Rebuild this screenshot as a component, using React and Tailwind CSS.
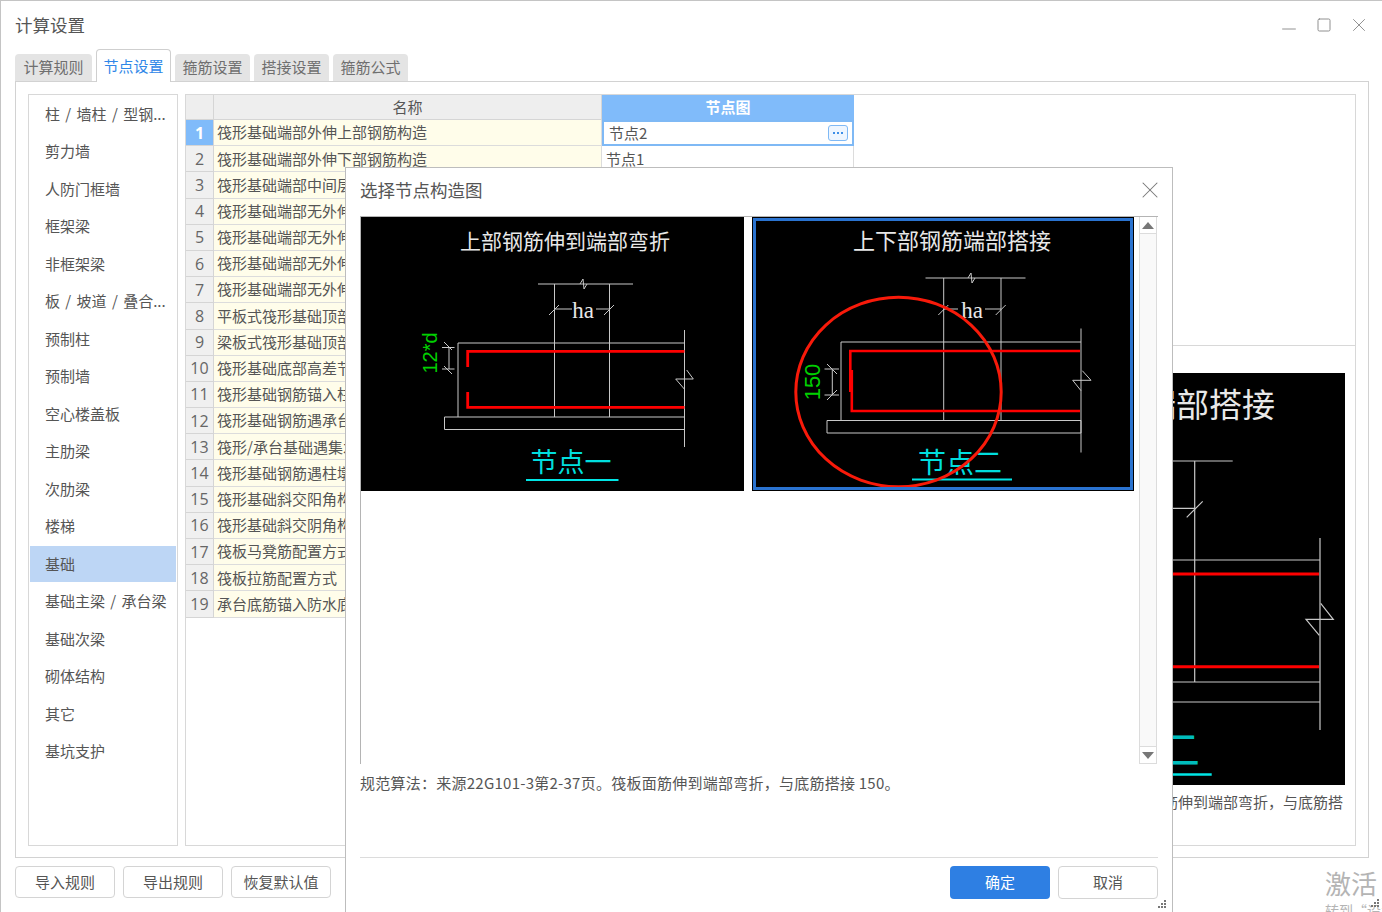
import { X, Minus, Square } from "lucide-react";

const sidebarItems = [
  "柱 / 墙柱 / 型钢...",
  "剪力墙",
  "人防门框墙",
  "框架梁",
  "非框架梁",
  "板 / 坡道 / 叠合...",
  "预制柱",
  "预制墙",
  "空心楼盖板",
  "主肋梁",
  "次肋梁",
  "楼梯",
  "基础",
  "基础主梁 / 承台梁",
  "基础次梁",
  "砌体结构",
  "其它",
  "基坑支护",
];

const rows = [
  "筏形基础端部外伸上部钢筋构造",
  "筏形基础端部外伸下部钢筋构造",
  "筏形基础端部中间层钢筋构造",
  "筏形基础端部无外伸上部钢筋构造",
  "筏形基础端部无外伸下部钢筋构造",
  "筏形基础端部无外伸中层钢筋构造",
  "筏形基础端部无外伸侧面钢筋构造",
  "平板式筏形基础顶部高差节点",
  "梁板式筏形基础顶部高差节点",
  "筏形基础底部高差节点",
  "筏形基础钢筋锚入柱墩",
  "筏形基础钢筋遇承台",
  "筏形/承台基础遇集水坑",
  "筏形基础钢筋遇柱墩",
  "筏形基础斜交阳角构造",
  "筏形基础斜交阴角构造",
  "筏板马凳筋配置方式",
  "筏板拉筋配置方式",
  "承台底筋锚入防水底板",
];

const cad = "#c8c8c8";
const cadFont = "'Noto Sans CJK SC', sans-serif";

function NodeOne() {
  return (
    <svg width="383" height="274" className="block">
      <g stroke={cad} fill="none" strokeWidth="1">
        <path d="M177 67H272M193.5 67V200M248.5 67V200" />
        <path d="M219 67l3-5 1 10 3-5" />
        <path d="M193.5 92H211M235 92H248.5M188 98l10-10M243 98l10-10" />
        <path d="M97 200V126H323.5M323.5 113V230M83.5 200H323.5V212.5H83.5Z" />
        <path d="M325.7 153L332.3 162H314.7L323.3 172" />
        <path d="M81 130.5H93.5M81 152H93.5M88 130.5V152M83 125l8 8M83 149l8 8" />
      </g>
      <g stroke="#ff0000" fill="none" strokeWidth="2.8">
        <path d="M106.7 150V134.4H323.5M106.7 175V190.4H323.5" />
      </g>
      <text x="222" y="101" textAnchor="middle" fill="#e8e8e8" fontSize="23" fontFamily="'Liberation Serif', serif">ha</text>
      <text transform="translate(76 136) rotate(-90)" textAnchor="middle" fill="#00d000" fontSize="20" fontFamily="'Liberation Sans', sans-serif">12*d</text>
      <text x="204" y="32" textAnchor="middle" fill="#e8e8e8" fontSize="21" fontFamily={cadFont}>上部钢筋伸到端部弯折</text>
      <text x="210" y="255" textAnchor="middle" fill="#00dede" fontSize="27" fontFamily={cadFont}>节点一</text>
      <path d="M165 263H257.5" stroke="#00e5e5" strokeWidth="2" />
    </svg>
  );
}

function NodeTwo() {
  return (
    <svg width="382" height="274" className="block">
      <g stroke={cad} fill="none" strokeWidth="1">
        <path d="M173.5 61H273.5M191.7 61V203.5M249 61V203.5" />
        <path d="M216 61l3-5 1 10 3-5" />
        <path d="M191.7 92H206M233 92H249M186.3 98l10-10M243.7 98l10-10" />
        <path d="M89 203.5V125H329M329 111.5V235.5M75 203.5H329V216H75Z" />
        <path d="M330.3 153.7L339 163.3H320.7L329 173.7" />
        <path d="M72.5 152H87M72.5 178H87M80.3 152V178M75 147l10 10M75 183l10-10" />
      </g>
      <g stroke="#ff0000" fill="none" strokeWidth="2.6">
        <path d="M328 134H98.3V175M99.8 153V194H328" />
      </g>
      <text x="220" y="101" textAnchor="middle" fill="#e8e8e8" fontSize="23" fontFamily="'Liberation Serif', serif">ha</text>
      <text transform="translate(68 165) rotate(-90)" textAnchor="middle" fill="#00d000" fontSize="22" fontFamily="'Liberation Sans', sans-serif">150</text>
      <text x="200" y="32" textAnchor="middle" fill="#e8e8e8" fontSize="22" fontFamily={cadFont}>上下部钢筋端部搭接</text>
      <text x="208" y="256" textAnchor="middle" fill="#00dede" fontSize="28" fontFamily={cadFont}>节点二</text>
      <path d="M160 262.5H260" stroke="#00e5e5" strokeWidth="2" />
      <ellipse cx="146.5" cy="175" rx="102.7" ry="94.7" stroke="#f81a0a" strokeWidth="3" fill="none" />
    </svg>
  );
}

function NodePreview() {
  return (
    <svg width="575" height="412" className="block">
      <g stroke={cad} fill="none" strokeWidth="1.2">
        <path d="M300 88H462.7M424.7 88V309" />
        <path d="M340 135.3H424.7M416.7 144.3l16-16" />
        <path d="M300 187H550M550 165V357M300 309H550M300 329H550" />
        <path d="M550.7 230.3L563.3 246.3H536L549.3 262.3" />
      </g>
      <path d="M300 201H549M300 293.7H549" stroke="#ff0000" strokeWidth="3" />
      <text x="505" y="44" textAnchor="end" fill="#e8e8e8" fontSize="33" fontFamily={cadFont}>上下部钢筋端部搭接</text>
      <text x="430" y="392" textAnchor="end" fill="#00bcbc" fontSize="42" fontFamily={cadFont}>节点二</text>
      <path d="M300 401.5H441.7" stroke="#00e5e5" strokeWidth="2.6" />
    </svg>
  );
}

function Grip({ className }) {
  return (
    <svg width="10" height="10" className={className}>
      <g fill="#777">
        <rect x="7" y="1" width="2" height="2" />
        <rect x="4" y="4" width="2" height="2" />
        <rect x="7" y="4" width="2" height="2" />
        <rect x="1" y="7" width="2" height="2" />
        <rect x="4" y="7" width="2" height="2" />
        <rect x="7" y="7" width="2" height="2" />
      </g>
    </svg>
  );
}

function Tab({ label, active, wide }) {
  if (active) {
    return (
      <div className="relative -mb-px z-10 flex h-[33px] w-[75px] items-center justify-center rounded-t border border-b-0 border-[#cfcfcf] bg-white text-[#2f87e8]">
        {label}
      </div>
    );
  }
  return (
    <div className={`flex h-[27px] items-center justify-center rounded-t bg-[#e4e4e4] text-[#6f6f6f] ${wide ? "w-[77px]" : "w-[75px]"}`}>
      {label}
    </div>
  );
}

function FootButton({ label }) {
  return (
    <button className="h-[32px] w-[100px] rounded border border-[#d4d4d4] bg-white text-[15px] text-[#555]">
      {label}
    </button>
  );
}

export default function App() {
  return (
    <div className="relative h-[912px] w-[1382px] overflow-hidden border-t border-l border-[#c4c4c4] bg-white text-[15px] text-[#555] font-['Noto_Sans_CJK_SC','Liberation_Sans',sans-serif]">
      {/* title bar */}
      <div className="flex h-[48px] items-center justify-between pl-[14px] pr-[12px]">
        <span className="text-[17.5px] text-[#555]">计算设置</span>
        <div className="flex items-center gap-[16px] text-[#888]">
          <Minus size={22} strokeWidth={1} className="mt-[8px]" />
          <Square size={16} strokeWidth={1.4} />
          <X size={22} strokeWidth={1} />
        </div>
      </div>

      {/* tabs */}
      <div className="flex h-[32px] items-end gap-[4px] pl-[14px]">
        <Tab label="计算规则" wide />
        <Tab label="节点设置" active />
        <Tab label="箍筋设置" />
        <Tab label="搭接设置" />
        <Tab label="箍筋公式" />
      </div>

      {/* main panel */}
      <div className="ml-[14px] flex h-[777px] w-[1354px] gap-[7px] border border-[#d2d2d2] p-[12px] pb-[11px]">
        <div className="w-[150px] shrink-0 border border-[#d8d8d8] pl-[1px]">
          {sidebarItems.map((item) => (
            <div
              key={item}
              className={`flex h-[37.5px] w-[146px] items-center bg-clip-content py-[0.75px] ${item === "基础" ? "bg-[#bdd6f5]" : ""}`}
            >
              <span className="whitespace-nowrap pl-[15px] [word-spacing:2px]">{item}</span>
            </div>
          ))}
        </div>

        <div className="flex min-w-0 flex-1 border border-[#d8d8d8]">
          {/* table */}
          <div className="w-[668px] shrink-0">
            <div className="flex h-[25px]">
              <div className="w-[28px] border-r border-b border-[#d5d5d5] bg-[#eeeeee]" />
              <div className="flex w-[388px] items-center justify-center border-r border-b border-[#d5d5d5] bg-[#eeeeee] pt-[1px]">名称</div>
              <div className="flex w-[252px] items-center justify-center bg-[#80bbfa] font-bold text-white">节点图</div>
            </div>
            {rows.map((name, i) => (
              <div key={i} className="flex h-[26.2px]">
                <div
                  className={`flex w-[28px] items-center justify-center border-r border-b border-[#d5d5d5] text-[16px] font-['Open_Sans',sans-serif] ${i === 0 ? "bg-[#80bbfa] font-bold text-white" : "bg-[#f0f0f0] text-[#666]"}`}
                >
                  {i + 1}
                </div>
                <div className="flex w-[388px] items-center overflow-hidden whitespace-nowrap border-r border-b border-[#dcdcdc] bg-[#fffdea] pl-[3px]">
                  {name}
                </div>
                {i === 0 ? (
                  <div className="flex w-[252px] items-center justify-between border-2 border-[#7fb9f5] bg-white pl-[5px] pr-[3px]">
                    <span>节点2</span>
                    <span className="mr-[1px] flex h-[16px] w-[20px] items-center justify-center gap-[2px] rounded-[3px] border border-[#7fb9f5] bg-[#eef6ff]">
                      <i className="h-[2px] w-[2px] bg-[#3d8fe8]" />
                      <i className="h-[2px] w-[2px] bg-[#3d8fe8]" />
                      <i className="h-[2px] w-[2px] bg-[#3d8fe8]" />
                    </span>
                  </div>
                ) : (
                  <div className="flex w-[252px] items-center border-r border-b border-[#dcdcdc] pl-[4px]">节点1</div>
                )}
              </div>
            ))}
          </div>

          {/* right side: empty upper area and preview */}
          <div className="flex min-w-0 flex-1 flex-col">
            <div className="h-[251px] border-b border-[#d8d8d8]" />
            <div className="flex flex-col items-end pr-[10px] pt-[27px]">
              <div className="bg-black">
                <NodePreview />
              </div>
              <div className="mt-[6px] mr-[2px] whitespace-nowrap">规范算法：来源22G101-3第2-37页。筏板面筋伸到端部弯折，与底筋搭</div>
            </div>
          </div>
        </div>
      </div>

      {/* bottom buttons */}
      <div className="mt-[8px] flex gap-[8px] pl-[14px]">
        <FootButton label="导入规则" />
        <FootButton label="导出规则" />
        <FootButton label="恢复默认值" />
      </div>

      {/* activation watermark */}
      <div className="absolute left-[1324px] top-[864px] w-[58px] overflow-hidden whitespace-nowrap text-[#b4b4b4]">
        <div className="text-[26px] leading-[36px]">激活</div>
        <div className="text-sm leading-[18px]">转到“设置”以激活 Windows</div>
      </div>
      <Grip className="absolute left-[1369px] top-[897px]" />

      {/* node picker dialog */}
      <div className="absolute left-[344px] top-[166px] z-20 flex h-[760px] w-[828px] flex-col border border-[#bdbdbd] bg-white px-[14px]">
        <div className="flex h-[48px] shrink-0 items-center justify-between pb-[4px]">
          <span className="text-[17.5px]">选择节点构造图</span>
          <X size={28} strokeWidth={0.9} className="mr-[-5.5px] text-[#777]" />
        </div>

        <div className="flex h-[548px] shrink-0 border-t border-l border-[#b4b4b4]">
          <div className="flex h-[275px] w-[778px] shrink-0 gap-[8px] pr-[5px]">
            <div className="h-[274px] w-[383px] bg-black">
              <NodeOne />
            </div>
            <div className="h-[274px] w-[382px] bg-black outline-[3px] -outline-offset-[4px] outline-[#2a73d0]">
              <NodeTwo />
            </div>
          </div>
          <div className="flex w-[18px] shrink-0 flex-col justify-between border-x border-b border-[#dcdcdc] bg-[#f9f9f9]">
            <div className="flex h-[17px] items-center justify-center border-b border-[#dcdcdc] bg-white">
              <div className="h-0 w-0 border-x-[6px] border-b-[7px] border-x-transparent border-b-[#777]" />
            </div>
            <div className="flex h-[17px] items-center justify-center border-t border-[#dcdcdc] bg-white">
              <div className="h-0 w-0 border-x-[6px] border-t-[7px] border-x-transparent border-t-[#777]" />
            </div>
          </div>
        </div>

        <div className="mt-[8px] h-[86px] shrink-0 border-b border-[#dcdcdc] whitespace-nowrap tracking-[0.25px]">
          规范算法：来源22G101-3第2-37页。筏板面筋伸到端部弯折，与底筋搭接 150。
        </div>

        <div className="mt-[8px] flex justify-end gap-[8px]">
          <button className="h-[33px] w-[100px] rounded bg-[#2e7fe3] text-[15px] text-white">确定</button>
          <button className="h-[33px] w-[100px] rounded border border-[#d4d4d4] bg-white text-[15px] text-[#555]">取消</button>
        </div>
        <Grip className="absolute left-[811px] top-[731px]" />
      </div>
    </div>
  );
}
